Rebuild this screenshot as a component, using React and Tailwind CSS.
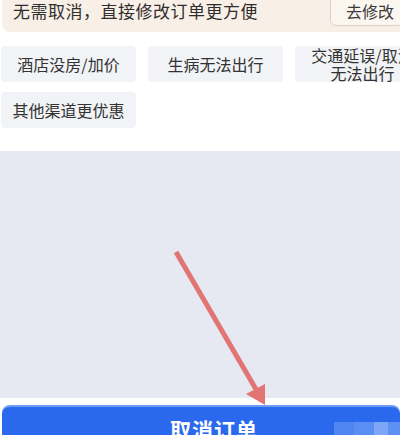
const reasons = [
  ["酒店没房/加价"],
  ["生病无法出行"],
  ["交通延误/取消", "无法出行"],
  ["其他渠道更优惠"],
];

function Arrow() {
  return (
    <svg
      className="absolute left-0 top-0 pointer-events-none"
      width="400"
      height="435"
      viewBox="0 0 400 435"
    >
      <line
        x1="176"
        y1="252"
        x2="257"
        y2="391"
        stroke="#e27474"
        strokeWidth="5"
        strokeLinecap="butt"
      />
      <polygon points="265,405 246,394 265,384" fill="#e27474" />
    </svg>
  );
}

export default function App() {
  return (
    <div
      className="relative w-[400px] h-[435px] overflow-hidden bg-white flex flex-col"
      style={{ fontFamily: '"Noto Sans CJK SC", "Noto Sans", sans-serif' }}
    >
      {/* notice banner */}
      <div className="ml-[2px] h-[32px] shrink-0 bg-[#f8efe6] rounded-bl-lg flex items-start justify-between">
        <span className="pl-[11px] text-[17px] leading-[22px] tracking-[0.5px] text-[#2e2e2e]">
          无需取消，直接修改订单更方便
        </span>
        <div className="-mt-[6px] w-[74px] h-[32px] mr-[-4px] border border-[#ddd2c6] rounded-md bg-[#fbf6f0] flex items-end pb-[4px] pl-[15px]">
          <span className="text-[16px] leading-[20px] text-[#3a3a3a]">去修改</span>
        </div>
      </div>

      {/* reasons */}
      <div className="shrink-0 pt-[14px] pb-[23px] grid grid-cols-[135px_135px_135px] gap-x-[12px] gap-y-[10px] pl-[1px]">
        {reasons.map((lines, i) => (
          <div
            key={i}
            className="h-[36px] rounded bg-[#f1f3f6] flex flex-col items-center justify-center text-[16px] leading-[18px] text-[#333] whitespace-nowrap"
          >
            {lines.map((l) => (
              <span key={l}>{l}</span>
            ))}
          </div>
        ))}
      </div>

      {/* empty gray area */}
      <div className="h-[247px] shrink-0 bg-[#e6e9f1]" />

      <div className="h-[7px] shrink-0 bg-white" />

      {/* bottom action */}
      <div className="relative ml-[2px] h-[50px] shrink-0 rounded-t-lg bg-[#2a68ee] border-t-2 border-[#6f9cf5] flex items-start justify-center pt-[8px]">
        <span className="text-[21px] leading-[28px] font-bold text-white tracking-[1px] ml-[26px]">
          取消订单
        </span>
        <div className="absolute right-0 top-[15px] flex">
          <div className="w-[20px] h-[14px] bg-[#4f86f2]" />
          <div className="w-[20px] h-[14px] bg-[#5a8ef3]" />
          <div className="w-[14px] h-[14px] bg-[#7ea6f6]" />
          <div className="w-[12px] h-[14px] bg-[#5d90f3]" />
        </div>
      </div>

      <Arrow />
    </div>
  );
}
